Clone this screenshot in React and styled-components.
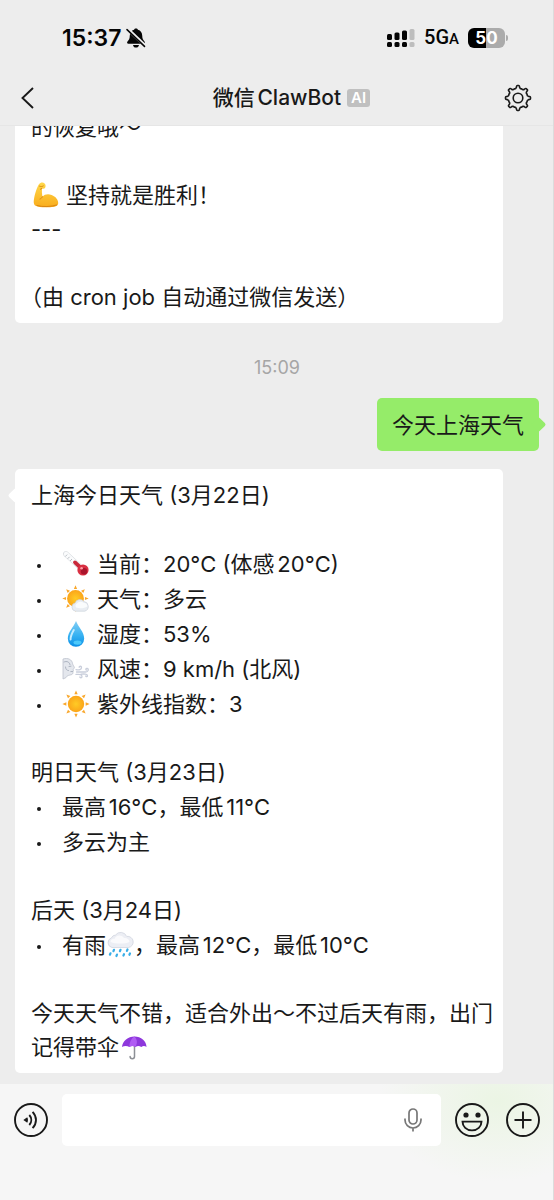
import React from "react";
import styled, { createGlobalStyle, css } from "styled-components";

const Global = createGlobalStyle`
  *, *::before, *::after { box-sizing: border-box; }
  body {
    margin: 0;
    background: #ededed;
    color: #191919;
    font-family: Inter, "Noto Sans CJK SC", sans-serif;
  }
  button { border: 0; padding: 0; background: none; color: inherit; font: inherit; cursor: pointer; }
  svg { display: block; }
`;

const Screen = styled.div`
  display: flex;
  flex-direction: column;
  height: 100vh;
  background: #ededed;
  border-right: 1px solid #dcdcdc;
`;

const TopBar = styled.header`
  flex: none;
  border-bottom: 1px solid #e6e6e6;
`;

const StatusBar = styled.div`
  display: flex;
  align-items: center;
  justify-content: space-between;
  height: 70px;
  padding: 6px 45px 0 62px;
  color: #050505;
`;

const StatusGroup = styled.div`
  display: flex;
  align-items: center;
  gap: ${(p) => p.$gap}px;
`;

const Clock = styled.time`
  font-size: 23px;
  font-weight: 600;
  line-height: 28px;
`;

const Network = styled.span`
  font-family: Roboto, Inter, sans-serif;
  font-size: 20px;
  font-weight: 500;
  line-height: 24px;
  small { font-size: 15px; }
`;

const Battery = styled.div`
  display: flex;
  align-items: center;
  gap: 1px;
  &::after {
    content: "";
    width: 2px;
    height: 6px;
    border-radius: 0 2px 2px 0;
    background: #ababab;
  }
`;

const BatteryBody = styled.span`
  width: 37px;
  height: 20px;
  border-radius: 6px;
  background: linear-gradient(90deg, #000 50%, #ababab 50%);
  color: #fff;
  font-size: 17px;
  font-weight: 700;
  line-height: 20px;
  text-align: center;
`;

const NavBar = styled.div`
  display: grid;
  grid-template-columns: 60px 1fr 60px;
  align-items: center;
  height: 55px;
`;

const NavButton = styled.button`
  display: flex;
  height: 40px;
  align-items: center;
  justify-content: ${(p) => (p.$end ? "flex-end" : "flex-start")};
  padding: ${(p) => (p.$end ? "0 21px 0 0" : "0 0 0 20px")};
`;

const Title = styled.h1`
  display: flex;
  align-items: center;
  justify-content: center;
  gap: 6px;
  margin: 0;
  padding-left: 30px;
  font-size: 21px;
  font-weight: 500;
  line-height: 30px;
  text-autospace: normal;
`;

const AiBadge = styled.span`
  padding: 0 4px;
  border-radius: 3px;
  background: #c0c0c0;
  color: #fff;
  font-size: 15px;
  font-weight: 600;
  line-height: 18px;
`;

const Chat = styled.main`
  flex: 1;
  min-height: 0;
  display: flex;
  flex-direction: column-reverse;
  overflow-y: auto;
  scrollbar-width: none;
`;

const Thread = styled.div`
  display: flex;
  flex-direction: column;
  gap: 18px;
  padding: 0 14px 11px 15px;
`;

const TimeStamp = styled.time`
  margin-top: 15px;
  color: #a6a6a6;
  font-size: 18px;
  line-height: 24px;
  text-align: center;
`;

const tail = css`
  &::before {
    content: "";
    position: absolute;
    top: 21px;
    width: 11px;
    height: 11px;
    border-radius: 2px;
    background: inherit;
    transform: rotate(45deg);
    ${(p) => (p.$mine ? "right: -5px;" : "left: -5px;")}
  }
`;

const Bubble = styled.article`
  position: relative;
  align-self: ${(p) => (p.$mine ? "flex-end" : "flex-start")};
  width: ${(p) => (p.$mine ? "auto" : "calc(100% - 36px)")};
  padding: ${(p) => (p.$mine ? "10px 15px 9px" : "9px 8px 9px 16px")};
  border-radius: 5px;
  background: ${(p) => (p.$mine ? "#95ec69" : "#fff")};
  font-size: 22px;
  line-height: 34px;
  text-autospace: no-autospace;
  text-spacing-trim: trim-start;
  ${(p) => p.$tail && tail}
`;

const Line = styled.p`
  margin: 0 0 ${(p) => (p.$gap ? "34px" : "0")};
`;

const List = styled.ul`
  margin: 0 0 34px;
  padding: 0;
  list-style: none;
  text-autospace: normal;
`;

const Item = styled.li`
  display: flex;
  align-items: center;
  height: 35px;
  &::before {
    content: "";
    width: 4px;
    height: 4px;
    margin: 4px 21px 0 6px;
    border-radius: 50%;
    background: #191919;
  }
`;

const Emoji = styled.svg`
  display: inline-block;
  width: 28px;
  height: 28px;
  vertical-align: -6px;
  margin-right: ${(p) => (p.$spaced ? 7 : 0)}px;
`;

const Composer = styled.footer`
  flex: none;
  display: flex;
  align-items: flex-start;
  height: 116px;
  padding: 10px 13px 0 14px;
  background: radial-gradient(ellipse 120px 80px at 90% 15%, #ebf5e4, #f6f6f6);
`;

const RoundButton = styled.button`
  width: 34px;
  height: 52px;
  flex: none;
  display: flex;
  align-items: center;
  margin-right: ${(p) => p.$gap || 0}px;
`;

const Field = styled.label`
  flex: 1;
  min-width: 0;
  display: flex;
  align-items: center;
  height: 52px;
  margin-right: 14px;
  padding: 0 19px 0 12px;
  border-radius: 5px;
  background: #fff;
`;

const Input = styled.input`
  flex: 1;
  min-width: 0;
  border: 0;
  outline: 0;
  background: transparent;
  font: inherit;
  font-size: 22px;
`;

const rays = (n, cx, cy, r1, r2, half) =>
  Array.from({ length: n }, (_, i) => {
    const a = (i * 2 * Math.PI) / n;
    const pt = (r, t) => `${(cx + r * Math.sin(t)).toFixed(2)} ${(cy - r * Math.cos(t)).toFixed(2)}`;
    return `M${pt(r1, a - half)}L${pt(r2, a)}L${pt(r1, a + half)}Z`;
  }).join("");

const gearPath = (() => {
  const out = [];
  const pt = (r, deg) => {
    const t = (deg * Math.PI) / 180;
    return `${(14 + r * Math.sin(t)).toFixed(2)} ${(14 - r * Math.cos(t)).toFixed(2)}`;
  };
  for (let i = 0; i < 8; i++) {
    const a = i * 45;
    out.push(
      `${i ? "L" : "M"}${pt(10.6, a - 9)}L${pt(11.8, a - 7)}Q${pt(12.5, a - 6)} ${pt(12.5, a - 3)}` +
      `L${pt(12.5, a + 3)}Q${pt(12.5, a + 6)} ${pt(11.8, a + 7)}L${pt(10.6, a + 9)}` +
      `C${pt(9.2, a + 14)} ${pt(9.4, a + 18)} ${pt(9.9, a + 22.5)}C${pt(9.4, a + 27)} ${pt(9.2, a + 31)} ${pt(10.6, a + 36)}`
    );
  }
  return out.join("") + "Z";
})();

const Muscle = () => (
  <Emoji viewBox="0 0 28 28" role="img" aria-label="💪" $spaced>
    <defs>
      <linearGradient id="arm" x1="0" y1="0" x2="0" y2="1">
        <stop offset="0" stopColor="#ffd84a" /><stop offset="1" stopColor="#f9ac1c" />
      </linearGradient>
    </defs>
    <path d="M8 3.2C9.4 1.4 12 1 13.6 2.4c1.3 1.2 1.2 3.2.4 4.6-.7 1-2.4.8-3 .5-.2 2.600-.1 5.600.4 8.200C13.400 13.400 17 12.600 20.600 14c4 1.500 6.800 4.800 6.600 8.200-.2 3.200-3.600 3.700-8 4-5.200.3-11 .4-14.600-1.400-2.500-1.400-2-5-1.200-9C4.300 11.800 6.200 5.800 8 3.200Z" fill="url(#arm)" />
    <path d="M8.600 5.200c1.300.6 2.600.5 3.600-.2M10.800 7.500l-1.400.7M11.400 15.700c-.4 1.200-1.400 2-2.400 2.300M6 24.600c6 1.600 14 1.200 19.600-.6" fill="none" stroke="#d98512" strokeWidth="1" strokeLinecap="round" />
  </Emoji>
);

const Thermometer = () => (
  <Emoji viewBox="0 0 28 28" role="img" aria-label="🌡️" $spaced>
    <path d="M4 4l15 14" stroke="#d5d9dd" strokeWidth="5.800" strokeLinecap="round" />
    <path d="M4 4l15 14" stroke="#fafbfc" strokeWidth="4.600" strokeLinecap="round" />
    <path d="M3.200 6.600l2-2M5.600 8.800l2-2M8 11l2-2" stroke="#aab0b6" strokeWidth=".8" />
    <path d="M13 12.400l7 6.600" stroke="#c8283a" strokeWidth="3.800" strokeLinecap="round" />
    <circle cx="21" cy="20" r="5.600" fill="#d92f42" />
    <circle cx="22" cy="21.200" r="3.200" fill="#a9142c" />
    <circle cx="19.600" cy="18.200" r="1.300" fill="#ff9ba4" />
  </Emoji>
);

const sunDefs = (id) => (
  <defs>
    <radialGradient id={id}>
      <stop offset="0" stopColor="#ffcb25" /><stop offset="1" stopColor="#fba51a" />
    </radialGradient>
  </defs>
);

const PartlyCloudy = () => (
  <Emoji viewBox="0 0 28 28" role="img" aria-label="🌤️" $spaced>
    {sunDefs("sunA")}
    <path d={rays(8, 13.5, 13.5, 9.6, 13.2, 0.17)} fill="#f9a72b" />
    <circle cx="13.500" cy="13.500" r="8.400" fill="url(#sunA)" />
    <path d="M13.500 26.200a4.200 4.200 0 0 1-.5-8.200 5.200 5.200 0 0 1 9-1.500 5 5 0 0 1 .8 9.700Z" fill="#e9edf2" stroke="#c5cdd6" strokeWidth=".6" />
    <path d="M14 22.500a3 3 0 0 1 1-4 4.500 4.500 0 0 1 6.500-.8 4 4 0 0 1 4 3.500c-3 2.300-8 2.600-11.500 1.300Z" fill="#fafcfd" />
  </Emoji>
);

const Droplet = () => (
  <Emoji viewBox="0 0 28 28" role="img" aria-label="💧" $spaced>
    <defs>
      <linearGradient id="drop" x1="0" y1="0" x2="0" y2="1">
        <stop offset="0" stopColor="#83cdf4" /><stop offset=".55" stopColor="#37b2f2" /><stop offset="1" stopColor="#0b8fe6" />
      </linearGradient>
    </defs>
    <path d="M14 1c2 5.500 8.200 11 8.200 17.600a8.200 8.200 0 0 1-16.400 0C5.800 12 12 6.500 14 1Z" fill="url(#drop)" />
    <path d="M11.800 10c-2 3.400-3.400 6-3.200 9.400" stroke="#c5ecff" strokeWidth="2" strokeLinecap="round" fill="none" />
    <ellipse cx="15.500" cy="22.600" rx="4" ry="2.200" fill="#4cc9fb" />
  </Emoji>
);

const Wind = () => (
  <Emoji viewBox="0 0 28 28" role="img" aria-label="🌬️" $spaced>
    <path d="M1 4c5-1.500 9 .6 9.600 4.600.2 1.600 1.800 3 1.800 4.200 0 .8-1.200.8-1.200 1.600.4 1 .3 1.700-.4 2.200.4 1 .2 2.400-1 2.900C7 20.600 5 20 4 22.600L1 24Z" fill="#e4e7ed" stroke="#bcc2cd" strokeWidth=".8" />
    <path d="M2 7c3-1.300 5.500 0 6 2.600M7 11.500l2-.3M3.500 12c0 2 1.200 3.500 3 3.600M8.800 16.600l2-.2" fill="none" stroke="#adb4c1" strokeWidth="1" strokeLinecap="round" />
    <path d="M14 14.600c3 .8 5.500-.2 5.500-2.200 0-1.500-2.300-1.500-2.300-.1M14.500 17h9c3 0 3.600-3.200 1.600-3.600-1.300-.2-1.700 1.400-.6 1.700M14 19.400c4-.4 6 .2 6 2s-2.300 1.700-2.100.4M19 19.200c3-.4 6.500-.2 6.500 1.500 0 1.300-1.700 1.300-1.700.2" fill="none" stroke="#c9cedb" strokeWidth="1.300" strokeLinecap="round" />
  </Emoji>
);

const Sun = () => (
  <Emoji viewBox="0 0 28 28" role="img" aria-label="☀️" $spaced>
    {sunDefs("sunB")}
    <path d={rays(8, 14, 14, 9.8, 13.6, 0.17)} fill="#f9a72b" />
    <circle cx="14" cy="14" r="8.200" fill="url(#sunB)" />
  </Emoji>
);

const RainCloud = () => (
  <Emoji viewBox="0 0 28 28" role="img" aria-label="🌧️">
    <path d="M6 16.500a5 5 0 0 1-.6-9.600A5 5 0 0 1 9.500 4a6.500 6.500 0 0 1 11.200 1.400A5.600 5.600 0 0 1 22.500 16.500Z" fill="#eceef4" stroke="#cdd1dc" strokeWidth=".7" />
    <path d="M4.500 11c0-3 3-3.500 4-3 1-3.500 6.500-5 9.500-1 3-.4 5.500 1.400 5.500 4-5 2-13 2.300-19 0Z" fill="#fafafc" />
    <path d="M8 18.800l-.6 1.400M14.500 18.800l-.6 1.400M21.500 18.500l-.6 1.400M4.500 22.300l-.6 1.400M11 23.600l-.6 1.400M18 23.200l-.6 1.400M24 22.400l-.6 1.400" stroke="#38aee8" strokeWidth="2.200" strokeLinecap="round" />
  </Emoji>
);

const Umbrella = () => (
  <Emoji viewBox="0 0 28 28" role="img" aria-label="☂️">
    <path d="M15.500 12v11.500a2.200 2.200 0 0 1-4.400 0" fill="none" stroke="#8d9096" strokeWidth="1.500" strokeLinecap="round" />
    <path d="M3 14C3.600 8 9 3.500 15.500 3.500S27.400 8 27.500 14c-1.600-1.400-3.600-1.400-5.200 0-2-1.400-4-1.400-5.800 0-2-1.400-4.200-1.400-6.200 0-2-1.400-5.200-1.400-7.300 0Z" fill="#8e38dc" />
    <path d="M10.300 14c0-4.500 2-8.500 5-10.500 2.700 2.500 3.700 6 1.200 10.500-2-1.400-4.200-1.400-6.200 0Z" fill="#b05cf3" />
  </Emoji>
);

const BellOff = () => (
  <svg width="20" height="20" viewBox="0 0 20 20" role="img" aria-label="静音">
    <path d="M10 .4c1 0 1.700.5 1.900 1.300 2.900.8 4.200 3 4.300 5.900.1 3.400.9 4.500 2.300 5.900.8.9.4 2.300-.9 2.300H2.400c-1.300 0-1.700-1.400-.9-2.300 1.500-1.500 2.200-2.500 2.300-5.900.1-2.900 1.400-5.100 4.300-5.900C8.300.9 9 .4 10 .4ZM7 17h6c-.2 1.600-1.500 2.600-3 2.600S7.200 18.600 7 17Z" fill="#050505" />
    <path d="M1.500 1l18 17" stroke="#ededed" strokeWidth="3.400" />
    <path d="M1 1.600l17.500 16.800" stroke="#050505" strokeWidth="1.500" strokeLinecap="round" />
  </svg>
);

const Signal = () => (
  <svg width="29" height="20" viewBox="0 0 29 20" role="img" aria-label="信号">
    <g fill="#050505">
      <rect x="1" y="6" width="5" height="6" rx="1.500" />
      <rect x="8.500" y="4.500" width="5" height="7.500" rx="1.500" />
      <rect x="16" y="2.500" width="5" height="9.500" rx="1.500" />
      <rect x="1" y="14" width="5" height="5" rx="1.500" />
      <rect x="8.500" y="14" width="5" height="5" rx="1.500" />
      <rect x="16" y="14" width="5" height="5" rx="1.500" />
    </g>
    <g fill="#bdbdbd">
      <rect x="23.500" y="1" width="5" height="11" rx="1.500" />
      <rect x="23.500" y="14" width="5" height="5" rx="1.500" />
    </g>
  </svg>
);

export default function App() {
  return (
    <>
      <Global />
      <Screen>
        <TopBar>
          <StatusBar>
            <StatusGroup $gap={5}>
              <Clock>15:37</Clock>
              <BellOff />
            </StatusGroup>
            <StatusGroup $gap={9}>
              <Signal />
              <Network>5G<small>A</small></Network>
              <Battery><BatteryBody>50</BatteryBody></Battery>
            </StatusGroup>
          </StatusBar>
          <NavBar>
            <NavButton aria-label="返回">
              <svg width="15" height="22" viewBox="0 0 15 22" fill="none" stroke="#191919" strokeWidth="1.900">
                <path d="M13 1L2.500 11 13 21" />
              </svg>
            </NavButton>
            <Title>微信ClawBot<AiBadge>AI</AiBadge></Title>
            <NavButton aria-label="设置" $end>
              <svg width="28" height="28" viewBox="0 0 28 28" fill="none" stroke="#191919" strokeWidth="1.600" strokeLinejoin="round">
                <path d={gearPath} />
                <circle cx="14" cy="14" r="4.800" />
              </svg>
            </NavButton>
          </NavBar>
        </TopBar>

        <Chat>
          <Thread>
            <Bubble>
              <Line $gap>的恢复哦～</Line>
              <Line><Muscle />坚持就是胜利！</Line>
              <Line $gap>---</Line>
              <Line>（由 cron job 自动通过微信发送）</Line>
            </Bubble>
            <TimeStamp>15:09</TimeStamp>
            <Bubble $mine $tail>今天上海天气</Bubble>
            <Bubble $tail>
              <Line $gap>上海今日天气 (3月22日)</Line>
              <List>
                <Item><Thermometer /><span>当前：20°C (体感20°C)</span></Item>
                <Item><PartlyCloudy /><span>天气：多云</span></Item>
                <Item><Droplet /><span>湿度：53%</span></Item>
                <Item><Wind /><span>风速：9 km/h (北风)</span></Item>
                <Item><Sun /><span>紫外线指数：3</span></Item>
              </List>
              <Line>明日天气 (3月23日)</Line>
              <List>
                <Item><span>最高16°C，最低11°C</span></Item>
                <Item><span>多云为主</span></Item>
              </List>
              <Line>后天 (3月24日)</Line>
              <List>
                <Item><span>有雨<RainCloud />，最高12°C，最低10°C</span></Item>
              </List>
              <Line>今天天气不错，适合外出～不过后天有雨，出门记得带伞<Umbrella /></Line>
            </Bubble>
          </Thread>
        </Chat>

        <Composer>
          <RoundButton aria-label="语音" $gap={14}>
            <svg width="34" height="34" viewBox="0 0 34 34" fill="none" stroke="#191919" strokeWidth="1.900">
              <circle cx="17" cy="17" r="16" />
              <path d="M9.400 17l3.800-2.800c1 1.700 1 3.900 0 5.600Z" fill="#191919" stroke="none" />
              <path d="M15.300 12c2.600 2.900 2.600 7.100 0 10M18.600 8.800c4.500 4.800 4.500 11.600 0 16.400" />
            </svg>
          </RoundButton>
          <Field>
            <Input type="text" aria-label="消息" />
            <svg width="18" height="24" viewBox="0 0 18 24" fill="none" stroke="#777" strokeWidth="1.700">
              <rect x="5" y="1" width="8" height="15" rx="4" />
              <path d="M1 10.500v1.500a8 8 0 0 0 16 0v-1.500M9 20v3.600" />
            </svg>
          </Field>
          <RoundButton aria-label="表情" $gap={17}>
            <svg width="34" height="34" viewBox="0 0 34 34" fill="none" stroke="#191919" strokeWidth="1.900">
              <circle cx="17" cy="17" r="16" />
              <circle cx="11" cy="12" r="2.600" fill="#191919" stroke="none" />
              <circle cx="23" cy="12" r="2.600" fill="#191919" stroke="none" />
              <path d="M7.500 18.600h19c0 5-4 8.800-9.500 8.800s-9.500-3.800-9.500-8.800Z" />
            </svg>
          </RoundButton>
          <RoundButton aria-label="更多">
            <svg width="34" height="34" viewBox="0 0 34 34" fill="none" stroke="#191919" strokeWidth="1.900">
              <circle cx="17" cy="17" r="16" />
              <path d="M17 8.500v17M8.500 17h17" />
            </svg>
          </RoundButton>
        </Composer>
      </Screen>
    </>
  );
}
